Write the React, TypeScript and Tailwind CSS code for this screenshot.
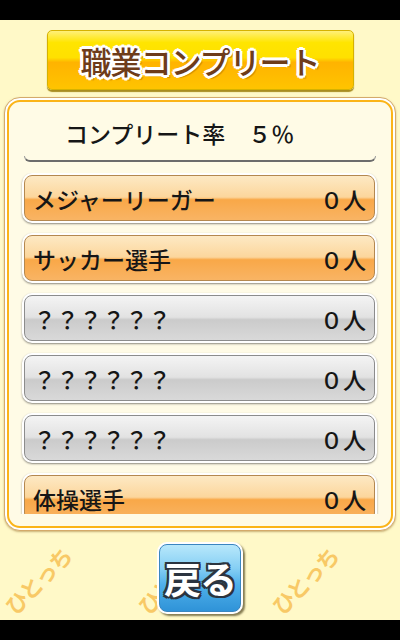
import React from "react";

const jp = { fontFamily: '"Noto Sans CJK JP", "Noto Sans", sans-serif' };

type Row = { name: string; count: string; known: boolean };

const rows: Row[] = [
  { name: "メジャーリーガー", count: "０人", known: true },
  { name: "サッカー選手", count: "０人", known: true },
  { name: "？？？？？？", count: "０人", known: false },
  { name: "？？？？？？", count: "０人", known: false },
  { name: "？？？？？？", count: "０人", known: false },
  { name: "体操選手", count: "０人", known: true },
];

function JobRow({ row }: { row: Row }) {
  return (
    <div className="shrink-0 h-[50px] rounded-[10px] bg-white p-[2px] shadow-[0_1px_2px_rgba(0,0,0,0.45)]">
      <div
        className={
          row.known
            ? "h-full rounded-[8px] border border-[#b48850] bg-[linear-gradient(to_bottom,#fde9c4_0%,#fcd69c_48%,#f9a848_54%,#f9b464_100%)] flex items-center justify-between pl-[8px] pr-[8px]"
            : "h-full rounded-[8px] border border-[#8c8c8c] bg-[linear-gradient(to_bottom,#f4f4f4_0%,#e2e2e2_48%,#cbcbcb_54%,#d9d9d9_100%)] flex items-center justify-between pl-[8px] pr-[8px]"
        }
      >
        <span className="text-[23px] leading-none font-medium text-[#161616] pt-[3px]" style={jp}>
          {row.name}
        </span>
        <span className="text-[23px] leading-none font-medium text-[#161616] pt-[3px]" style={jp}>
          {row.count}
        </span>
      </div>
    </div>
  );
}

function Watermark({ left }: { left: string }) {
  return (
    <span
      className={`absolute top-[570px] ${left} -rotate-45 text-[22px] font-bold text-[#f8c966] tracking-[-1px] leading-none`}
      style={jp}
    >
      ひとっち
    </span>
  );
}

export default function App() {
  return (
    <div className="relative w-[400px] h-[640px] bg-[#fff9c8] flex flex-col overflow-hidden" style={jp}>
      <div className="h-[20px] bg-black shrink-0" />

      {/* Title */}
      <div className="shrink-0 pt-[10px] flex justify-center">
        <div className="w-[307px] h-[60px] rounded-[5px] border border-[#d6b200] bg-[linear-gradient(to_bottom,#fff07a_0%,#ffe500_20%,#ffe000_46%,#ffb300_54%,#ffc400_100%)] shadow-[0_2px_1px_#a88c20] flex items-center justify-center">
          <span
            className="text-[31px] font-medium leading-none text-[#6e3c1a] tracking-[-1px] [text-shadow:2px_0_0_#fff,-2px_0_0_#fff,0_2px_0_#fff,0_-2px_0_#fff,2px_2px_0_#fff,-2px_-2px_0_#fff,2px_-2px_0_#fff,-2px_2px_0_#fff,3px_0_0_#fff,-3px_0_0_#fff,0_3px_0_#fff,0_-3px_0_#fff,3px_3px_1px_#d08a00]"
            style={jp}
          >
            職業コンプリート
          </span>
        </div>
      </div>

      {/* Panel */}
      <div className="shrink-0 mx-[4px] mt-[7px] h-[434px] rounded-[16px] border border-[#d4aa6a] bg-white p-[2px] shadow-[0_1px_2px_rgba(150,110,40,0.5)]">
        <div className="h-full rounded-[13px] border-2 border-[#fbb418] bg-[#fffbe6] flex flex-col">
          <div className="h-[54px] shrink-0 flex items-center pl-[56px] pt-[8px]">
            <span className="text-[23px] font-medium leading-none text-[#161616]" style={jp}>
              コンプリート率　５％
            </span>
          </div>
          <div className="shrink-0 mx-[15px] h-[6px] border-b-2 border-x border-[#6c6c6c] border-x-[#9a9a9a] rounded-b-[9px] border-t-0" />
          <div className="flex-1 min-h-0 overflow-hidden mt-[11px] pl-[13px] pr-[14px] flex flex-col gap-[10px]">
            {rows.map((r, i) => (
              <JobRow key={i} row={r} />
            ))}
          </div>
          <div className="h-[12px] shrink-0" />
        </div>
      </div>

      {/* Bottom area */}
      <div className="relative flex-1 flex justify-center">
        <div className="absolute inset-0 -top-[532px] pointer-events-none">
          <Watermark left="left-[-4px]" />
          <Watermark left="left-[129px]" />
          <Watermark left="left-[263px]" />
        </div>
        <div className="relative mt-[11px] w-[86px] h-[72px] rounded-[10px] bg-white p-[2px] shadow-[2px_2px_2px_rgba(80,70,30,0.7)]">
          <div className="h-full rounded-[8px] border border-[#3a86c0] bg-[linear-gradient(to_bottom,#b8e8fb_0%,#86cff4_35%,#4fb0ea_60%,#2f93d8_100%)] flex items-center justify-center">
            <span
              className="text-[37px] font-bold leading-none text-white tracking-[-1px] [text-shadow:2px_0_0_#2b3440,-2px_0_0_#2b3440,0_2px_0_#2b3440,0_-2px_0_#2b3440,2px_2px_0_#2b3440,-2px_-2px_0_#2b3440,2px_-2px_0_#2b3440,-2px_2px_0_#2b3440]"
              style={jp}
            >
              戻る
            </span>
          </div>
        </div>
      </div>

      <div className="h-[20px] bg-black shrink-0" />
    </div>
  );
}
